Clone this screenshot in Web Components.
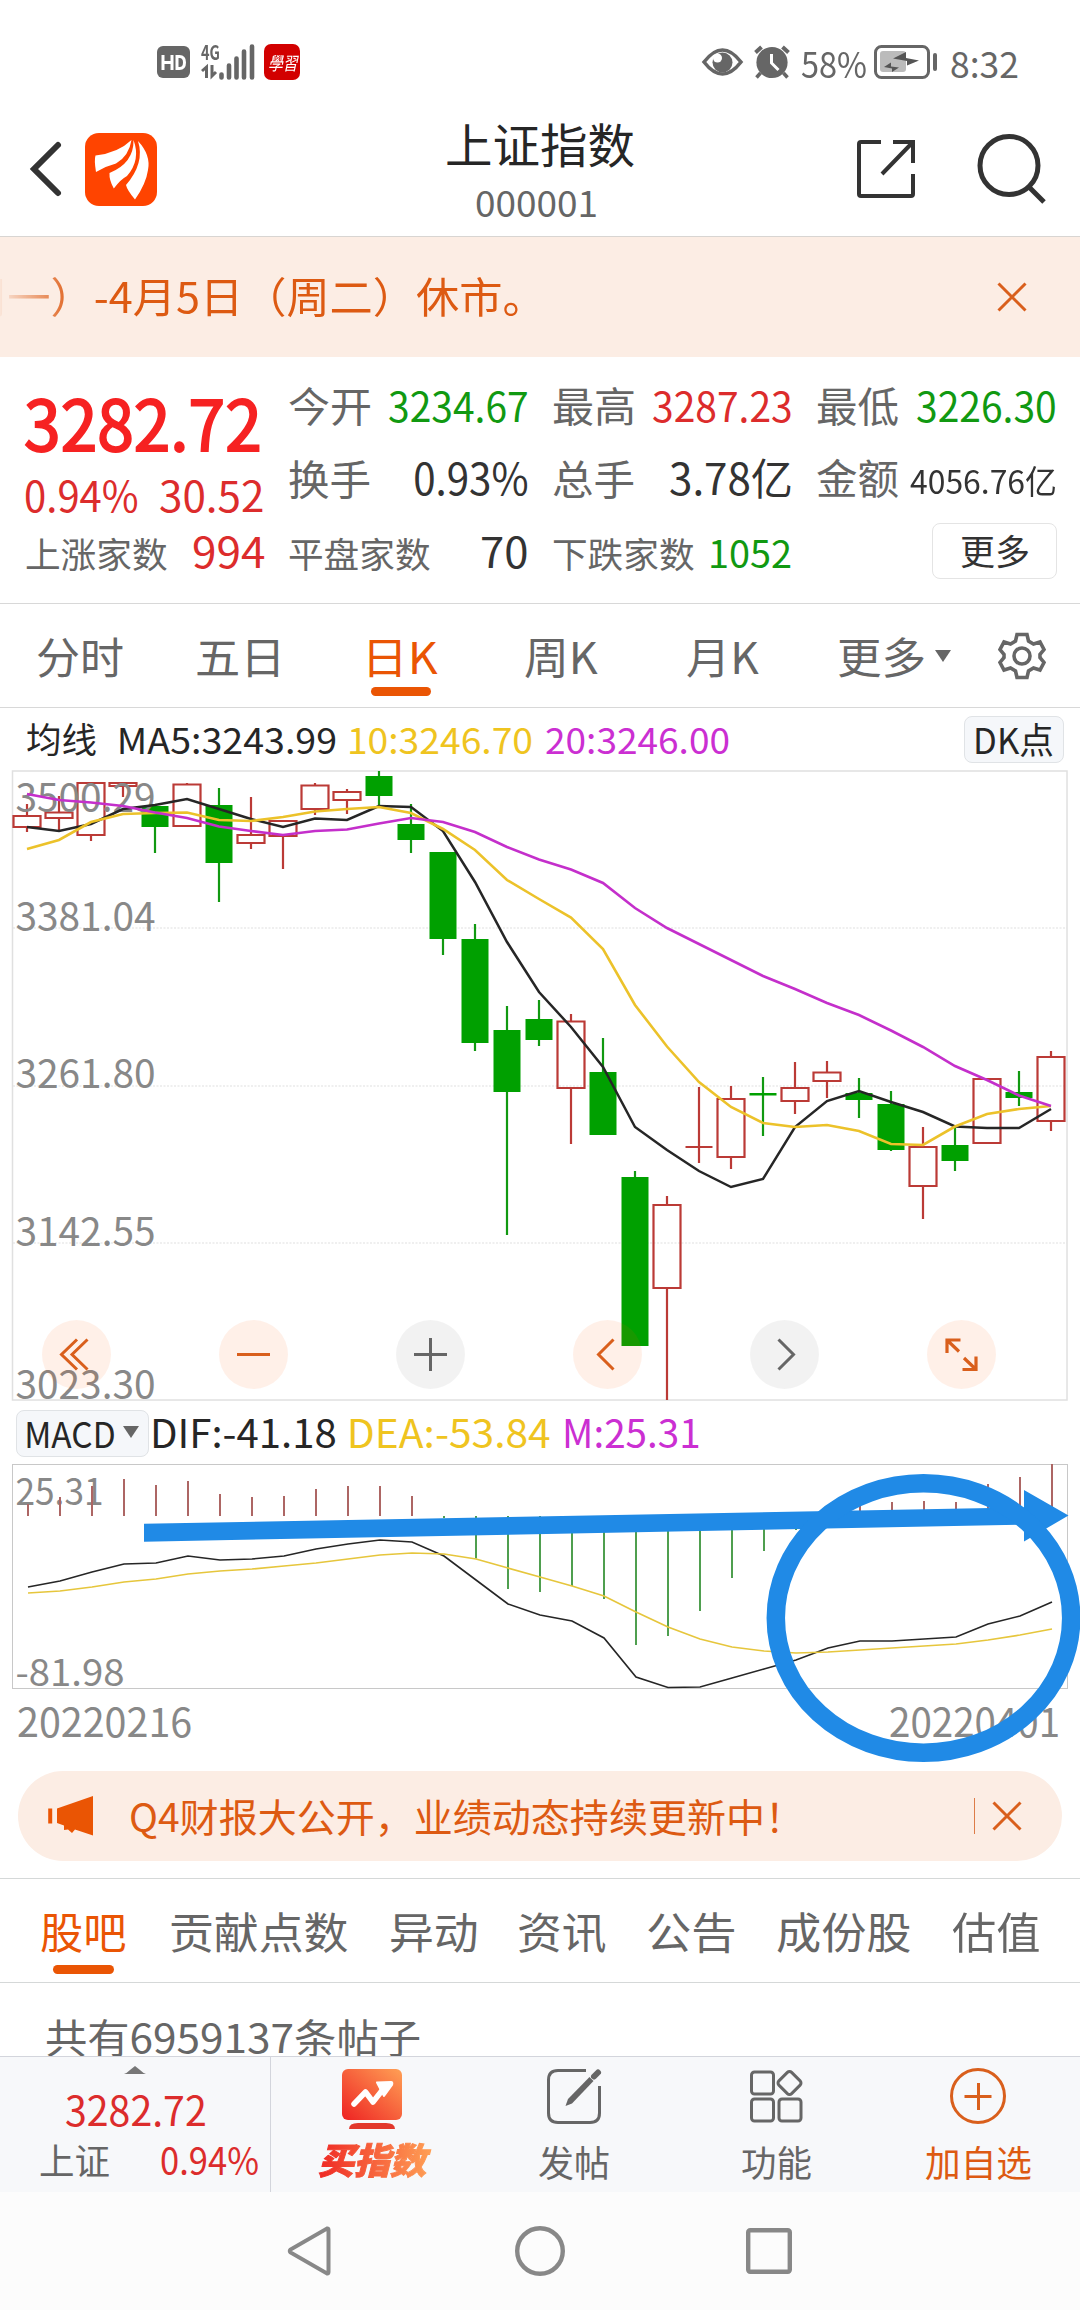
<!DOCTYPE html>
<html lang="zh">
<head>
<meta charset="utf-8">
<title>上证指数</title>
<style>
  body {
    margin: 0;
    width: 1080px;
    height: 2310px;
    overflow: hidden;
    background: #fff;
    color: #666;
    font-family: "Noto Sans CJK SC", "Noto Sans", sans-serif;
  }
</style>
</head>
<body>
<quote-page></quote-page>

<script>
const FONT = '"Noto Sans CJK SC", "Noto Sans", sans-serif';

// base: every element only writes its template and its styles
class BaseElement extends HTMLElement {
  constructor() {
    super();
    this.attachShadow({ mode: 'open' });
  }
  getTemplate() { return ''; }
  getStyles() { return ''; }
  render() {
    const template = document.createElement('template');
    template.innerHTML = `<style>${this.getStyles()}</style>${this.getTemplate()}`;
    this.shadowRoot.replaceChildren(template.content.cloneNode(true));
  }
  connectedCallback() {
    this.render();
  }
}

// text stretched so that its ink is exactly "w" pixels wide
const ruler = document.createElement('canvas').getContext('2d');
class FitText extends BaseElement {
  getTemplate() {
    const size = Number(this.getAttribute('size'));
    const weight = this.getAttribute('weight') || 400;
    const w = Number(this.getAttribute('w'));
    ruler.font = `${weight} ${size}px ${FONT}`;
    const m = ruler.measureText(this.textContent);
    const scale = w / (m.actualBoundingBoxLeft + m.actualBoundingBoxRight);
    const shift = m.actualBoundingBoxLeft * scale;
    return `<span style="font-size:${size}px;font-weight:${weight};transform:translateX(${shift}px) scaleX(${scale})"><slot></slot></span>`;
  }
  getStyles() {
    const size = this.getAttribute('size');
    return `
      :host { display: block; flex: none; width: ${this.getAttribute('w')}px; font-size: ${size}px; line-height: var(--lh, 1); white-space: nowrap; }
      span { display: inline-block; transform-origin: 0 50%; vertical-align: baseline; }
    `;
  }
}
customElements.define('fit-text', FitText);

const icons = {
  hd: [33, 32, `<rect width="33" height="32" rx="6" fill="#666"/><path d="M6 9v15M15 9v15M6 16.500h9M20 10.500v12h2.500q5 0 5-6t-5-6z" fill="none" stroke="#fff" stroke-width="3"/>`],
  bars: [37, 36, `<path d="M2.500 33.500v-3M10 33.500v-12M17.500 33.500v-19M25 33.500v-26M33 33.500v-31" stroke="#666" stroke-width="4.600" stroke-linecap="round"/>`],
  updown: [16, 13, `<path d="M5.500 13V2L1 6M11 0v11l4-4" fill="none" stroke="#666" stroke-width="3"/>`],
  eye: [41, 28, `<path d="M2 14Q20.500-10 39 14Q20.500 38 2 14z" fill="none" stroke="#666" stroke-width="3.600"/><circle cx="20.500" cy="14.500" r="10" fill="#666"/><circle cx="15.500" cy="10" r="4.500" fill="#fff"/>`],
  alarm: [36, 34, `<circle cx="18" cy="17.500" r="15.600" fill="#666"/><path d="M1.500 7.500l6-5.500M34.500 7.500l-6-5.500" stroke="#666" stroke-width="4"/><path d="M6.500 28l-4 4.500M29.500 28l4 4.500" stroke="#666" stroke-width="3.500"/><path d="M17.500 9v9l7 7" fill="none" stroke="#fff" stroke-width="3"/>`],
  battery: [63, 34, `<rect x="1.500" y="1.500" width="53" height="31" rx="6" fill="none" stroke="#666" stroke-width="3"/><rect x="6" y="6" width="26" height="21" rx="3" fill="#bbb"/><path d="M32 7v6l13 2.500-12 5v-4.500L19 13.500zM17 17.500v4l8 1-7 4.500v-3.500l-8-1.500z" fill="#555"/><rect x="59" y="8" width="4" height="18" rx="2" fill="#666"/>`],
  back: [30, 56, `<path d="M27 4L3 28L27 52" fill="none" stroke="#333" stroke-width="6" stroke-linecap="round"/>`],
  logo: [72, 73, `<rect width="72" height="73" rx="14" fill="#ff4400"/><path d="M46.500 7Q33 20 10.500 22.500Q9 27 11 39Q21 33 31 30.500Q44 23 46.500 7zM48.500 7Q49 30 24.500 40Q24 47 28.800 55.500Q36 46 42 43Q56 27 48.500 7zM53 8Q66 22 63 37Q61 51 50 66.500Q42 57 41 52Q60 30 53 8z" fill="#fff"/>`],
  share: [58, 58, `<path d="M24 2H4Q2 2 2 4V54Q2 56 4 56H54Q56 56 56 54V34M56 23V2H36M56 2L25 34" fill="none" stroke="#333" stroke-width="4"/>`],
  search: [70, 72, `<circle cx="32" cy="32.500" r="29" fill="none" stroke="#333" stroke-width="5"/><path d="M52 54L67 69" stroke="#333" stroke-width="5"/>`],
  close: [30, 30, `<path d="M1.500 1.500l27 27M28.500 1.500l-27 27" stroke="#d95f1c" stroke-width="3"/>`],
  gear: [46, 48, `<path d="M18 2.500h10l1.500 6.500 5 3 6.500-2 4 7.500-4 5v3l4 5-4 7.500-6.500-2-5 3-1.500 6.500h-10l-1.500-6.500-5-3-6.500 2-4-7.500 4-5v-3l-4-5 4-7.500 6.500 2 5-3z" fill="none" stroke="#666" stroke-width="3.600"/><circle cx="23" cy="24" r="8" fill="none" stroke="#666" stroke-width="3.600"/>`],
  down: [16, 12, `<path d="M0 0h16l-8 12z" fill="#666"/>`],
  up: [22, 8, `<path d="M0 8Q3 7 6 4L11 0L16 4Q19 7 22 8z" fill="#777"/>`],
  first: [69, 69, `<path d="M35 19.500L19.500 34.500L35 49.500M45.500 19.500L30 34.500L45.500 49.500" fill="none" stroke="#d95f1c" stroke-width="3"/>`],
  minus: [69, 69, `<path d="M18 34.500h33" stroke="#d95f1c" stroke-width="3"/>`],
  plus: [69, 69, `<path d="M18 34.500h33M34.500 18v33" stroke="#666" stroke-width="3"/>`],
  prev: [69, 69, `<path d="M40.500 19.500L25.500 34.500L40.500 49.500" fill="none" stroke="#d95f1c" stroke-width="3"/>`],
  next: [69, 69, `<path d="M28.500 19.500L43.500 34.500L28.500 49.500" fill="none" stroke="#666" stroke-width="3"/>`],
  expand: [69, 69, `<path d="M20 33V20H33.500M20 20L32 31.500M37 38L49 49.500M49 36.500V49.500H35.500" fill="none" stroke="#d95f1c" stroke-width="3.200"/>`],
  horn: [46, 40, `<path d="M2.200 12.500v15" stroke="#ea5504" stroke-width="4"/><path d="M9 12.500L45 0V39.500L27 33.500L24 37L20 33.500L16 34V29.500L9 27z" fill="#ea5504"/>`],
  buy: [60, 60, `<defs><linearGradient id="g" x1="0" y1="1" x2="1" y2="0"><stop offset="0" stop-color="#ee2222"/><stop offset="1" stop-color="#ffa055"/></linearGradient></defs><rect width="60" height="51" rx="6" fill="url(#g)"/><path d="M12 35L23.500 23L31 33L42 19" fill="none" stroke="#fff" stroke-width="5.500" stroke-linecap="round" stroke-linejoin="round"/><path d="M35 13.500L49 13Q51 13 50 16L42 27Z" fill="#fff" stroke="#fff" stroke-width="2" stroke-linejoin="round"/><path d="M7 60Q7 54 16 54H44Q53 54 53 60z" fill="#e2382c"/>`],
  post: [54, 55, `<path d="M39 1.500H11Q1.500 1.500 1.500 11V44Q1.500 53.500 11 53.500H43Q52.500 53.500 52.500 44V17" fill="none" stroke="#666" stroke-width="3"/><path d="M18.500 37L21 30L42.500 8L46.500 12L25 34.500z" fill="#666"/><path d="M47 7.500L51 3.500" stroke="#666" stroke-width="6" stroke-linecap="round"/>`],
  apps: [53, 54, `<g fill="none" stroke="#666" stroke-width="3"><rect x="1.500" y="3" width="22" height="22" rx="3"/><rect x="1.500" y="30" width="22" height="22" rx="3"/><rect x="29" y="30" width="22" height="22" rx="3"/><rect x="30.500" y="5" width="18" height="18" rx="3" transform="rotate(45 39.500 14)"/></g>`],
  add: [56, 56, `<circle cx="28" cy="28" r="26.500" fill="none" stroke="#d95f1c" stroke-width="3"/><path d="M14.500 28.500h27M28.500 15v27" stroke="#d95f1c" stroke-width="3"/>`],
  navBack: [44, 52, `<path d="M40 3.500Q41.500 3 41.500 5V47Q41.500 49 40 48.500L3.500 27.500Q2 26 3.500 24.500z" fill="none" stroke="#888" stroke-width="4"/>`],
  navHome: [50, 50, `<circle cx="25" cy="25" r="22.800" fill="none" stroke="#888" stroke-width="4.400"/>`],
  navRecent: [46, 46, `<rect x="2.200" y="2.200" width="41.600" height="41.600" rx="2" fill="none" stroke="#888" stroke-width="4.400"/>`],
};

class UiIcon extends BaseElement {
  getTemplate() {
    const [w, h, body] = icons[this.getAttribute('name')];
    return `<svg width="${w}" height="${h}" viewBox="0 0 ${w} ${h}">${body}</svg>`;
  }
  getStyles() {
    return `:host { display: block; flex: none; } svg { display: block; overflow: visible; }`;
  }
}
customElements.define('ui-icon', UiIcon);

class StatusBar extends BaseElement {
  getTemplate() {
    return `
      <ui-icon name="hd"></ui-icon>
      <div class="net">
        <div class="type"><fit-text size="20" w="18" weight="700">4G</fit-text><ui-icon name="updown"></ui-icon></div>
        <ui-icon name="bars"></ui-icon>
      </div>
      <div class="app"><fit-text size="18" w="28">學習</fit-text></div>
      <div class="space"></div>
      <ui-icon name="eye"></ui-icon>
      <ui-icon name="alarm"></ui-icon>
      <fit-text size="36" w="65">58%</fit-text>
      <ui-icon name="battery"></ui-icon>
      <fit-text size="36" w="67" class="time">8:32</fit-text>
    `;
  }
  getStyles() {
    return `
      :host { display: flex; align-items: center; box-sizing: border-box; height: 96px; padding: 28px 62px 0 157px; gap: 11px; }
      .net { display: flex; width: 53px; height: 36px; margin-right: -1px; }
      .type { display: flex; flex-direction: column; justify-content: space-between; width: 18px; height: 34px; }
      .type fit-text { --lh: 16px; }
      .app { display: grid; place-items: center; width: 36px; height: 36px; border-radius: 7px; background: #d20000; color: #fff; font-style: italic; }
      .space { flex: 1; }
      ui-icon[name=battery] { margin-left: -3px; }
      .time { margin-left: 3px; }
    `;
  }
}
customElements.define('status-bar', StatusBar);

class TitleBar extends BaseElement {
  getTemplate() {
    return `
      <div class="side"><ui-icon name="back"></ui-icon><ui-icon name="logo"></ui-icon></div>
      <div class="title">
        <fit-text size="47" w="187" class="name">上证指数</fit-text>
        <fit-text size="36" w="120" class="code">000001</fit-text>
      </div>
      <div class="side right"><ui-icon name="share"></ui-icon><ui-icon name="search"></ui-icon></div>
    `;
  }
  getStyles() {
    return `
      :host { display: grid; grid-template-columns: 1fr 300px 1fr; box-sizing: border-box; height: 141px; border-bottom: 1px solid #d8d5d2; }
      .side { display: flex; align-items: center; padding: 6px 0 0 31px; gap: 24px; }
      .right { justify-content: flex-end; padding: 6px 33px 0 0; gap: 62px; }
      .title { display: flex; flex-direction: column; align-items: center; padding-top: 23px; gap: 17px; }
      .name { color: #262626; }
      .code { margin-right: 8px; }
    `;
  }
}
customElements.define('title-bar', TitleBar);

class HolidayNotice extends BaseElement {
  getTemplate() {
    return `
      <div class="text"><fit-text size="42" w="553">周一）-4月5日（周二）休市。</fit-text></div>
      <ui-icon name="close"></ui-icon>
    `;
  }
  getStyles() {
    return `
      :host { display: flex; align-items: center; justify-content: space-between; height: 120px; padding-right: 53px; background: #fcede4; color: #dd5a12; }
      .text { overflow: hidden; width: 900px; padding: 8px 0 12px; mask-image: linear-gradient(90deg, rgba(0,0,0,.05), #000 75px); -webkit-mask-image: linear-gradient(90deg, rgba(0,0,0,.05), #000 75px); }
      .text fit-text { margin-left: -35px; }
    `;
  }
}
customElements.define('holiday-notice', HolidayNotice);

// label on the left, value (slot) on the right
class QuoteCell extends BaseElement {
  getTemplate() {
    const long = this.getAttribute('label').length > 2;
    return `<fit-text size="${long ? 35.5 : 41}" w="${long ? 141 : 81}">${this.getAttribute('label')}</fit-text><slot></slot>`;
  }
  getStyles() {
    return `:host { display: flex; justify-content: space-between; align-items: baseline; }`;
  }
}
customElements.define('quote-cell', QuoteCell);

class QuotePanel extends BaseElement {
  getTemplate() {
    return `
      <div class="main red">
        <fit-text size="70" w="233" class="price">3282.72</fit-text>
        <div class="pct"><fit-text size="42" w="112">0.94%</fit-text><fit-text size="42" w="103">30.52</fit-text></div>
        <quote-cell label="上涨家数" class="grey"><fit-text size="42" w="71" class="red">994</fit-text></quote-cell>
      </div>
      <div class="grid">
        <quote-cell label="今开"><fit-text size="41" w="138" class="green">3234.67</fit-text></quote-cell>
        <quote-cell label="最高"><fit-text size="41" w="138" class="red">3287.23</fit-text></quote-cell>
        <quote-cell label="最低"><fit-text size="41" w="138" class="green">3226.30</fit-text></quote-cell>
        <quote-cell label="换手"><fit-text size="43" w="112" class="dark">0.93%</fit-text></quote-cell>
        <quote-cell label="总手"><fit-text size="43" w="121" class="dark">3.78亿</fit-text></quote-cell>
        <quote-cell label="金额"><fit-text size="33" w="145" class="dark">4056.76亿</fit-text></quote-cell>
        <quote-cell label="平盘家数"><fit-text size="42" w="45" class="dark">70</fit-text></quote-cell>
        <quote-cell label="下跌家数" class="drop"><fit-text size="38" w="80" class="green">1052</fit-text></quote-cell>
        <div class="more"><fit-text size="35" w="68">更多</fit-text></div>
      </div>
    `;
  }
  getStyles() {
    return `
      :host { display: flex; box-sizing: border-box; height: 247px; padding-left: 26px; gap: 26px; border-bottom: 1px solid #d8d8d8; --lh: 44px; }
      .main { display: flex; flex-direction: column; width: 237px; padding-top: 29px; }
      .price { --lh: 70px; color: #f62222; -webkit-text-stroke: 2px #f62222; }
      .pct { display: flex; justify-content: space-between; margin: 16px 0 12px; }
      .grid { display: grid; grid-template-columns: repeat(3, 239px); grid-template-rows: 72px 74px 44px; column-gap: 25px; padding-top: 25px; }
      .grid quote-cell { padding-right: 1.500px; }
      .drop { padding-top: 2px; }
      .more { display: grid; place-items: center; justify-self: end; box-sizing: border-box; width: 125px; height: 56px; margin: -5px -1px 0 0; padding-bottom: 3px; border: 1.500px solid #e4e4e4; border-radius: 8px; color: #333; }
      .red { color: #dc2c2c; }
      .green { color: #119911; }
      .dark { color: #333; }
      .grey { color: #666; margin-right: -1px; }
    `;
  }
}
customElements.define('quote-panel', QuotePanel);

class PeriodTabs extends BaseElement {
  getTemplate() {
    return `
      <fit-text size="43" w="86">分时</fit-text>
      <fit-text size="43" w="81">五日</fit-text>
      <div class="active"><fit-text size="43" w="69">日K</fit-text></div>
      <fit-text size="43" w="73">周K</fit-text>
      <fit-text size="43" w="72">月K</fit-text>
      <div class="more"><fit-text size="43" w="85">更多</fit-text><ui-icon name="down"></ui-icon></div>
      <ui-icon name="gear"></ui-icon>
    `;
  }
  getStyles() {
    return `
      :host { display: grid; grid-template-columns: 160px 155px 177px 139px 184px 159px 95px; place-items: center; box-sizing: border-box; height: 104px; border-bottom: 1px solid #d8d8d8; }
      .active { color: #ea5504; height: 43px; }
      .active::after { content: ""; display: block; width: 60px; height: 9px; margin: 9.500px 0 0 1.500px; border-radius: 5px; background: #ea5504; }
      .more { display: flex; align-items: center; gap: 11px; }
    `;
  }
}
customElements.define('period-tabs', PeriodTabs);

class IndicatorRow extends BaseElement {
  getTemplate() { return `<slot></slot>`; }
  getStyles() {
    return `
      :host { display: flex; align-items: center; height: 62px; color: #262626; }
      ::slotted(fit-text) { margin-bottom: 3px; }
      ::slotted(.chip) { display: flex; align-items: center; justify-content: center; box-sizing: border-box; height: 47px; padding-bottom: 2px; border: 1.500px solid #e0e3e6; border-radius: 8px; background: #f5f7fa; }
    `;
  }
}
customElements.define('indicator-row', IndicatorRow);

// candles: [colour, body top, body bottom, high, low]
const candles = [
  ['r',816,827,804,832],['r',812.5,818,796,830],['r',783,835,783,841],['r',783,786,783,797],['g',806,827,806,853],
  ['r',784.5,826,783,826],['g',805,863,788,902],['r',835,843,797,849],['r',821,836,821,869],['r',785.5,809,783,815],
  ['r',792,800,789,814],['g',776,796,771,805],['g',824,840,804,853],['g',852,939,852,955],['g',939,1043,924,1051],
  ['g',1030,1092,1006,1235],['g',1019,1040,1000,1046],['r',1021.5,1088,1014,1144],['g',1072,1135,1038,1135],['g',1177,1346,1171,1346],
  ['r',1205,1288,1196,1400],['r',1147,1147,1087,1163],['r',1099,1157,1086,1169],['g',1093,1095.5,1077,1136],['r',1088,1101,1062,1114],
  ['r',1072.5,1081,1061,1098],['g',1093,1100,1078,1118],['g',1104,1150,1091,1151],['r',1147,1186,1127,1219],['g',1145,1161,1127,1171],
  ['r',1079,1143,1079,1144],['g',1092,1098,1071,1106],['r',1057,1121,1051,1131]
];
const ma5 = [827,831,824,809,805,799,809,819,827,818.5,820,806,807,831,882,942,992,1027,1067,1127,1150,1171,1187,1179,1127,1101,1091,1102,1112,1126.5,1128,1128,1109];
const ma10 = [849,840,822,814,813,812.5,820,821,817,811.5,809,807,813,829,850,880,899,917.5,949,1005,1046.5,1082,1107,1123,1127,1125,1131,1144,1145,1126.5,1114,1109,1106];
const ma20 = [794,800,802.5,806,812.5,818,826.5,831,835,831,829.5,823.5,818,822,832,847,859.5,869.5,883,908,928,944,960,976,989,1003,1015,1030.5,1047,1066,1080,1095.5,1106];
const dif = [1587,1581,1572,1564,1563,1556,1560,1559,1556,1549,1544,1540,1542,1556,1580,1604,1615,1621,1638,1677,1687.5,1687,1678,1669,1660,1648,1641,1641,1639,1637,1624,1616,1602];
const dea = [1593,1591,1587,1582,1579,1574,1571,1569,1566,1563,1559,1555,1553,1554,1559,1568,1577,1586,1596,1612,1627,1639,1647,1651,1653,1652,1650,1648,1646,1644,1640,1635,1629];
const macd = [1504,1497,1486,1479,1485,1481,1494,1497,1496,1489,1486,1486,1496,1518,1558.5,1589,1592,1586,1599,1645,1636,1611,1578,1551,1530,1521,1506,1502,1501,1502,1484,1477,1464];

const line = (ys, x0, color, width) =>
  `<polyline points="${ys.map((y, i) => `${x0 + 32 * i},${y}`).join(' ')}" fill="none" stroke="${color}" stroke-width="${width}"/>`;

const axisLabel = (text, y, width, size) =>
  `<text x="15.500" y="${y}" font-size="${size}" textLength="${width}" lengthAdjust="spacingAndGlyphs" fill="#888">${text}</text>`;

class KlineChart extends BaseElement {
  getTemplate() {
    const body = candles.map(([c, top, bottom, high, low], i) => {
      const x = 27 + 32 * i;
      if (c === 'g') {
        return `<path d="M${x} ${high}V${low}" stroke="#119911" stroke-width="2.200"/><rect x="${x - 13.5}" y="${top}" width="27" height="${bottom - top}" fill="#00a000"/>`;
      }
      // a path, so that a doji (no body height) still gets its bar
      return `<path d="M${x} ${high}V${top}M${x} ${bottom}V${low}M${x - 13.5} ${top}h27V${bottom}h-27z" fill="none" stroke="#bb3a36" stroke-width="2.200"/>`;
    }).join('');
    return `
      <svg width="1080" height="632" viewBox="0 770 1080 632">
        <path d="M13 928H1067M13 1086H1067M13 1243H1067" stroke="#eaeaea" stroke-width="1.500" stroke-dasharray="2 1.500"/>
        <rect x="12.500" y="771" width="1054.500" height="629" fill="none" stroke="#e0e0e0" stroke-width="1.500"/>
        ${body}
        ${axisLabel('3500.29', 811.5, 140, 39.5)}
        ${axisLabel('3381.04', 931, 140, 39.5)}
        ${axisLabel('3261.80', 1088, 140, 39.5)}
        ${axisLabel('3142.55', 1246, 140, 39.5)}
        ${axisLabel('3023.30', 1399, 140, 39.5)}
        ${line(ma5, 27, '#262626', 2.5)}
        ${line(ma10, 27, '#ecc22a', 2.6)}
        ${line(ma20, 27, '#c42fcb', 2.6)}
      </svg>
      <div class="tools">
        <ui-icon name="first"></ui-icon>
        <ui-icon name="minus"></ui-icon>
        <ui-icon name="plus" class="off"></ui-icon>
        <ui-icon name="prev"></ui-icon>
        <ui-icon name="next" class="off"></ui-icon>
        <ui-icon name="expand"></ui-icon>
      </div>
    `;
  }
  getStyles() {
    return `
      :host { display: block; position: relative; height: 632px; }
      svg { display: block; }
      /* floats over the candles */
      .tools { position: absolute; left: 42px; bottom: 13.500px; display: flex; gap: 108px; }
      .tools ui-icon { border-radius: 50%; background: rgba(255, 90, 0, .09); }
      .tools .off { background: rgba(0, 0, 0, .05); }
    `;
  }
}
customElements.define('kline-chart', KlineChart);

class MacdChart extends BaseElement {
  getTemplate() {
    const sticks = macd.map((y, i) =>
      `<path d="M${28 + 32 * i} 1516V${y}" stroke="${y < 1516 ? '#ad6664' : '#4f9f4f'}" stroke-width="2"/>`).join('');
    return `
      <svg width="1080" height="226" viewBox="0 1464 1080 226">
        <rect x="12.500" y="1464.500" width="1055" height="224" fill="none" stroke="#c8c8c8"/>
        ${axisLabel('25.31', 1505, 88, 37)}
        ${axisLabel('-81.98', 1685.5, 109, 37)}
        ${sticks}
        ${line(dif, 28, '#262626', 1.6)}
        ${line(dea, 28, '#e6c63c', 1.7)}
      </svg>
      <svg class="mark" width="1080" height="310" viewBox="0 1464 1080 310">
        <path d="M144 1523.700L1024 1507.500V1490L1068.500 1515.500L1024 1541.500V1524.700L144 1541.700z" fill="#208ae6"/>
        <ellipse cx="923.500" cy="1618" rx="147.700" ry="134.700" fill="none" stroke="#208ae6" stroke-width="18.500"/>
      </svg>
    `;
  }
  getStyles() {
    return `
      :host { display: block; position: relative; height: 226px; }
      svg { display: block; }
      /* hand drawn arrow and circle, over the chart and the dates */
      .mark { position: absolute; left: 0; top: 0; z-index: 1; }
    `;
  }
}
customElements.define('macd-chart', MacdChart);

class DateRange extends BaseElement {
  getTemplate() {
    return `<fit-text size="40" w="173">20220216</fit-text><fit-text size="40" w="168">20220401</fit-text>`;
  }
  getStyles() {
    return `:host { display: flex; justify-content: space-between; box-sizing: border-box; height: 81px; padding: 10px 22px 0 18px; color: #888; }`;
  }
}
customElements.define('date-range', DateRange);

class PromoBar extends BaseElement {
  getTemplate() {
    return `
      <ui-icon name="horn"></ui-icon>
      <fit-text size="39" w="647">Q4财报大公开，业绩动态持续更新中！</fit-text>
      <i></i>
      <ui-icon name="close"></ui-icon>
    `;
  }
  getStyles() {
    return `
      :host { display: flex; align-items: center; box-sizing: border-box; height: 90px; margin: 0 18px 17px; padding: 0 40px 0 30px; border-radius: 45px; background: #fcede4; color: #dd5a12; }
      fit-text { margin: 0 0 2px 37px; }
      i { width: 1.500px; height: 36px; margin: 0 17px 0 auto; background: #dd7c48; }
    `;
  }
}
customElements.define('promo-bar', PromoBar);

class ForumTabs extends BaseElement {
  getTemplate() {
    return `
      <div class="active"><fit-text size="43.500" w="85">股吧</fit-text></div>
      <fit-text size="43.500" w="177">贡献点数</fit-text>
      <fit-text size="43.500" w="86">异动</fit-text>
      <fit-text size="43.500" w="87">资讯</fit-text>
      <fit-text size="43.500" w="86">公告</fit-text>
      <fit-text size="43.500" w="133">成份股</fit-text>
      <fit-text size="43.500" w="87">估值</fit-text>
    `;
  }
  getStyles() {
    return `
      :host { display: flex; justify-content: space-between; box-sizing: border-box; height: 105px; padding: 30px 41px 0; border: solid #d5d8d8; border-width: 1px 0; }
      .active { color: #ea5504; margin-right: 3px; }
      .active::after { content: ""; display: block; width: 61px; height: 9px; margin: 12px auto 0; border-radius: 5px; background: #ea5504; }
    `;
  }
}
customElements.define('forum-tabs', ForumTabs);

class PostCount extends BaseElement {
  getTemplate() { return `<fit-text size="40" w="374"><slot></slot></fit-text>`; }
  getStyles() {
    return `:host { display: block; box-sizing: border-box; height: 73px; padding: 33px 0 0 46px; overflow: hidden; }`;
  }
  // the measured text has to be direct content of fit-text
  render() {
    super.render();
    const fit = this.shadowRoot.querySelector('fit-text');
    fit.textContent = this.textContent;
    fit.render();
  }
}
customElements.define('post-count', PostCount);

class BottomBar extends BaseElement {
  getTemplate() {
    return `
      <div class="index">
        <ui-icon name="up"></ui-icon>
        <fit-text size="41" w="139">3282.72</fit-text>
        <div class="row"><fit-text size="36" w="69" class="grey">上证</fit-text><fit-text size="38" w="97">0.94%</fit-text></div>
      </div>
      <div class="item"><ui-icon name="buy"></ui-icon><b>买指数</b></div>
      <div class="item"><ui-icon name="post"></ui-icon><fit-text size="36" w="70">发帖</fit-text></div>
      <div class="item"><ui-icon name="apps"></ui-icon><fit-text size="36" w="69">功能</fit-text></div>
      <div class="item add"><ui-icon name="add"></ui-icon><fit-text size="36" w="105">加自选</fit-text></div>
    `;
  }
  getStyles() {
    return `
      :host { display: grid; grid-template-columns: 271px 202px repeat(3, 202px); box-sizing: border-box; height: 136px; border-top: 1px solid #d3d5dc; background: #f7f8fa; }
      .index { display: flex; flex-direction: column; align-items: center; box-sizing: border-box; padding-top: 9px; border-right: 1px solid #d3d5dc; color: #dc2c2c; }
      .index > fit-text { margin-top: 14px; }
      .row { display: flex; justify-content: space-between; align-items: baseline; width: 218px; margin: 11px 0 0 27px; }
      .grey { color: #666; }
      .item { display: flex; flex-direction: column; align-items: center; justify-content: space-between; box-sizing: border-box; height: 125px; padding: 12px 0 3px; }
      .item:nth-child(2) { padding-top: 14px; }
      .add { padding-top: 11px; color: #dd5a12; }
      b { font-size: 36px; line-height: 36px; font-weight: 900; font-style: italic; color: transparent; background: linear-gradient(90deg, #ee2222, #ffa055); -webkit-background-clip: text; background-clip: text; -webkit-text-stroke: 1px transparent; padding: 0 6px 3px; }
    `;
  }
}
customElements.define('bottom-bar', BottomBar);

class SystemNav extends BaseElement {
  getTemplate() {
    return `<ui-icon name="navBack"></ui-icon><ui-icon name="navHome"></ui-icon><ui-icon name="navRecent"></ui-icon>`;
  }
  getStyles() {
    return `
      :host { display: flex; align-items: center; justify-content: space-between; height: 118px; padding: 0 288px 0 287px; background: #fcfcfc; }
      ui-icon[name=navHome] { margin-left: 3px; }
    `;
  }
}
customElements.define('system-nav', SystemNav);

class QuotePage extends BaseElement {
  getTemplate() {
    return `
      <status-bar></status-bar>
      <title-bar></title-bar>
      <holiday-notice></holiday-notice>
      <quote-panel></quote-panel>
      <period-tabs></period-tabs>
      <indicator-row class="ma">
        <fit-text size="35" w="69">均线</fit-text>
        <fit-text size="36" w="216" class="m5">MA5:3243.99</fit-text>
        <fit-text size="36" w="182" class="yellow">10:3246.70</fit-text>
        <fit-text size="36" w="183" class="purple">20:3246.00</fit-text>
        <div class="chip dk"><fit-text size="36" w="77">DK点</fit-text></div>
      </indicator-row>
      <kline-chart></kline-chart>
      <indicator-row class="macd">
        <div class="chip type"><fit-text size="36" w="87">MACD</fit-text><ui-icon name="down"></ui-icon></div>
        <fit-text size="39" w="182">DIF:-41.18</fit-text>
        <fit-text size="39" w="200" class="yellow">DEA:-53.84</fit-text>
        <fit-text size="39" w="134" class="purple">M:25.31</fit-text>
      </indicator-row>
      <macd-chart></macd-chart>
      <date-range></date-range>
      <promo-bar></promo-bar>
      <forum-tabs></forum-tabs>
      <post-count>共有6959137条帖子</post-count>
      <bottom-bar></bottom-bar>
      <system-nav></system-nav>
    `;
  }
  getStyles() {
    return `
      :host { display: block; }
      .ma { padding: 0 16px 0 27px; gap: 14px; }
      .m5 { margin-left: 10px; }
      .dk { width: 100px; margin-left: auto; }
      .macd { padding-left: 16px; gap: 15px; }
      .type { width: 133px; gap: 9px; margin-right: -11px; }
      .yellow { color: #efc41f; }
      .purple { color: #cb2fd2; }
    `;
  }
}
customElements.define('quote-page', QuotePage);
</script>
</body>
</html>
